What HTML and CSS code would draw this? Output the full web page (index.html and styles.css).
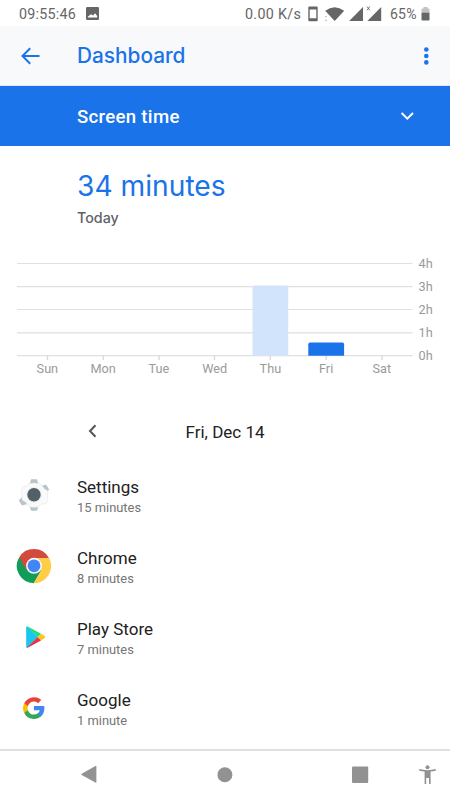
FILE: index.html
```html
<!DOCTYPE html>
<html lang="en">
<head>
<meta charset="utf-8">
<meta name="viewport" content="width=device-width, initial-scale=1">
<title>Dashboard</title>
<link rel="stylesheet" href="styles.css">
</head>
<body>
<div class="screen">
  <div class="status">
    <span class="clock">09:55:46</span>
    <svg class="photo" width="13" height="13" viewBox="0 0 13 13"><path fill="#666" fill-rule="evenodd" d="M1.200 0h10.600Q13 0 13 1.200v10.600q0 1.200-1.200 1.200H1.200Q0 13 0 11.800V1.200Q0 0 1.200 0zM1.800 10.600h9.400V9L9 6.200 7.200 8.600 5 7.200 1.800 9.800z"/></svg>
    <span class="speed">0.00 K/s</span>
    <svg class="indicators" width="57" height="18" viewBox="0 0 57 18">
      <g fill="#666">
        <path fill-rule="evenodd" d="M3.300 1.500h7.400q1 0 1 1v12.700q0 1-1 1H3.300q-1 0-1-1V2.500q0-1 1-1zM3.700 4.400v8.900h6.600V4.400z"/>
        <path d="M19.200 5.700Q28.700-1.300 38.200 5.700L28.700 16.100z"/>
        <path d="M57 2v14.100H43.200z"/>
      </g>
      <path fill="#bbb" d="M19 11.200h2v1h-2zM19 14.700h2v1h-2z"/>
    </svg>
    <svg class="sim" width="18" height="18" viewBox="0 0 18 18"><path fill="#666" d="M17.200 2v14.100H3.400z"/><path d="M3 1.500l2.800 3.800M5.800 1.500L3 5.300" stroke="#666" fill="none" stroke-width=".9"/></svg>
    <span class="percent">65%</span>
    <svg class="battery" width="9" height="14" viewBox="0 0 9 14"><path fill="#c2c2c2" d="M.5 6V2.200q0-.7.7-.7h1.300V0h4v1.500h1.300q.7 0 .7.700V6z"/><path fill="#666" d="M.5 5.800h8v7q0 .8-.8.800H1.300q-.8 0-.8-.8z"/></svg>
  </div>

  <header class="appbar">
    <svg class="back" width="20" height="18" viewBox="0 0 20 18"><path d="M19.500 9H2.500M10.200 1.300L2.500 9l7.700 7.700" fill="none" stroke="#1a73e8" stroke-width="2"/></svg>
    <h1>Dashboard</h1>
    <svg class="more" width="6" height="20" viewBox="0 0 6 20" fill="#1a73e8"><circle cx="3.300" cy="3.500" r="2.300"/><circle cx="3.300" cy="10" r="2.300"/><circle cx="3.300" cy="16.400" r="2.300"/></svg>
  </header>

  <div class="picker">
    <span>Screen time</span>
    <svg width="14" height="10" viewBox="0 0 14 10"><path d="M1.600 2L7.300 7.700 13 2" fill="none" stroke="#fff" stroke-width="2"/></svg>
  </div>

  <section class="summary">
    <div class="total">34 minutes</div>
    <div class="today">Today</div>
  </section>

  <section class="chart">
    <div class="graph">
      <svg class="plot" width="396" height="104" viewBox="0 0 396 104">
        <path d="M0 7.500h395.500M0 30.600h395.500M0 53.500h395.500M0 76.900h395.500M0 99.700h395.500" stroke="#e0e0e0" stroke-width="1.200"/>
        <path d="M30.500 100v4M86.200 100v4M142 100v4M197.500 100v4M253.300 100v4M309.200 100v4M365 100v4" stroke="#d8d8d8" stroke-width="1.300"/>
        <path fill="#d2e3fc" d="M235.500 99.500V31q0-1.500 1.500-1.500h32.700q1.500 0 1.500 1.500v68.500z"/>
        <path fill="#1a73e8" d="M291.300 99.700V88.200q0-1.700 1.700-1.700h32.400q1.700 0 1.700 1.700v11.500z"/>
      </svg>
      <div class="days"><span>Sun</span><span>Mon</span><span>Tue</span><span>Wed</span><span>Thu</span><span>Fri</span><span>Sat</span></div>
    </div>
    <div class="hours"><span>4h</span><span>3h</span><span>2h</span><span>1h</span><span>0h</span></div>
  </section>

  <div class="date">
    <svg width="9" height="14" viewBox="0 0 9 14"><path d="M7.500 1.300L2 7l5.500 5.700" fill="none" stroke="#555" stroke-width="2"/></svg>
    <span>Fri, Dec 14</span>
  </div>

  <ul class="apps">
    <li>
      <svg width="36" height="36" viewBox="0 0 36 36">
        <g fill="#b9c4c9"><path id="tooth" d="M13.400 8l1.300-5q.3-.8.900-.8h4.800q.6 0 .9.800l1.300 5v4h-9.200z"/><use href="#tooth" transform="rotate(60 18 18)"/><use href="#tooth" transform="rotate(180 18 18)"/><use href="#tooth" transform="rotate(240 18 18)"/></g>
        <path d="M12.500 6.700q5.500-1.200 11 0 2.500.5 3.300 3 1.200 2.500 4 3.500 1.600.8.800 2.700-.8 2.300 0 4.400.8 2-.1 3.700l-1.300 2.300q-.8 1.300-2.500.6-2.200-.6-3.500 1.400-1 1.400-2.800 1.700-3.400.6-6.800 0-2.500-.5-3.600-3-1-2.300-3.700-3.300-2-.8-1.200-2.900.7-2.500-.4-4.600-1-2-.1-3.800l1.400-2.400q.9-1.300 2.700-.6 1.300.2 2.300-1.300.3-1 .5-1.400z" fill="#fafafa" stroke="#e3e6e8" stroke-width=".6"/>
        <circle cx="18" cy="17.800" r="7.700" fill="#eceeef"/><circle cx="18" cy="17.700" r="6.700" fill="#546067"/>
      </svg>
      <div class="label"><b>Settings</b><small>15 minutes</small></div>
    </li>
    <li>
      <svg width="36" height="36" viewBox="0 0 36 36">
        <path fill="#109d58" d="M3.100 9.400A17.200 17.200 0 0 0 18 35.200L25.400 22.200H18z"/>
        <path fill="#d24a3e" d="M3.100 9.400A17.200 17.200 0 0 1 32.900 9.900H18L10.700 22.200z"/>
        <path fill="#ffcd46" d="M18 9.900h15.100A17.200 17.200 0 0 1 17.500 35.200l7.700-13z"/>
        <circle cx="18" cy="17.800" r="8" fill="#f5f5f5"/><circle cx="18" cy="17.800" r="6.400" fill="#4285f4"/>
      </svg>
      <div class="label"><b>Chrome</b><small>8 minutes</small></div>
    </li>
    <li>
      <svg width="36" height="36" viewBox="0 0 36 36">
        <path fill="#18c6ee" d="M10.200 8.300q.1-.9.900-.7L21.700 18 11 28.700q-.8 0-.8-.7z"/>
        <path fill="#20dc84" d="M10.700 7.500q.4-.2 1 .1L25 14.700 21.700 18z"/>
        <path fill="#e8324a" d="M10.700 28.800q.5.200 1-.1L25 21.400 21.700 18z"/>
        <path fill="#ffc41a" d="M25 14.700l3.700 2.300q1.300.9 0 1.900L25 21.400 21.700 18z"/>
      </svg>
      <div class="label"><b>Play Store</b><small>7 minutes</small></div>
    </li>
    <li>
      <svg width="36" height="36" viewBox="0 0 36 36">
        <g transform="translate(7.100 7.200) scale(.905)">
          <path fill="#4285f4" d="M23.500 12.270c0-.85-.08-1.660-.2-2.450H12v4.640h6.460a5.530 5.530 0 0 1-2.400 3.630v3.010h3.880c2.270-2.090 3.560-5.170 3.560-8.830z"/>
          <path fill="#34a853" d="M12 24c3.240 0 5.960-1.080 7.940-2.910l-3.880-3c-1.080.72-2.450 1.160-4.060 1.160-3.130 0-5.780-2.110-6.730-4.960H1.260v3.100A12 12 0 0 0 12 24z"/>
          <path fill="#fbbc05" d="M5.270 14.290A7.200 7.200 0 0 1 4.890 12c0-.79.140-1.560.38-2.290v-3.100H1.260a12 12 0 0 0 0 10.780z"/>
          <path fill="#ea4335" d="M12 4.750c1.770 0 3.350.61 4.600 1.800l3.440-3.440A12 12 0 0 0 1.260 6.610l4.010 3.100C6.220 6.860 8.870 4.750 12 4.750z"/>
        </g>
      </svg>
      <div class="label"><b>Google</b><small>1 minute</small></div>
    </li>
  </ul>

  <nav class="navbar">
    <svg width="450" height="49" viewBox="0 0 450 49" fill="#929292">
      <path d="M81.700 23.700L95.400 16q1-.5 1 .5v15.600q0 1-1 .5L81.700 25q-.8-.6 0-1.300z"/>
      <circle cx="224.900" cy="24.700" r="7.500"/>
      <rect x="352" y="16.400" width="16.200" height="16.600" rx="1.100"/>
      <circle cx="427.500" cy="17.200" r="2"/>
      <path d="M419.300 19q8.200 2.300 16.400 0l.3 1.600q-2.700.8-5.400 1V34H429v-6h-2.800v6h-1.600V21.600q-2.800-.2-5.600-1z"/>
    </svg>
  </nav>
</div>
</body>
</html>
```
FILE: styles.css
```css
* { box-sizing: border-box; }
body { margin: 0; background: #fff; font-family: Roboto, "Liberation Sans", sans-serif; }
svg { display: block; flex: none; }
.screen { width: 450px; height: 800px; display: flex; flex-direction: column; overflow: hidden; }
.status { height: 26px; flex: none; display: flex; align-items: center; padding: 1px 18px 0 19px; color: #666; font-size: 14.300px; line-height: 26px; white-space: nowrap; }
.clock { width: 67px; letter-spacing: .25px; }
.speed { margin-left: 146px; width: 61px; letter-spacing: .3px; }
.indicators { margin-top: 1px; }
.sim { margin: 1px 0 0 1px; }
.percent { margin-left: 8px; width: 31px; font-size: 14px; letter-spacing: .2px; }
.appbar { height: 60px; flex: none; display: flex; align-items: center; padding: 0 21px 0 20px; background: #f8f9fb; border-bottom: 1px solid #e4e9f1; }
.appbar h1 { flex: 1; margin: 0 0 0 37px; color: #1a73e8; font: 550 20.800px/28px Inter, sans-serif; }
.picker { height: 60px; flex: none; display: flex; align-items: center; justify-content: space-between; padding: 2px 36px 0 77px; background: #1a73e8; color: #fff; font-size: 18.600px; font-weight: 500; letter-spacing: .3px; }
.picker svg { margin-top: -3px; }
.summary { height: 110px; flex: none; padding: 22px 0 0 77px; }
.total { color: #1a73e8; font: 400 28.200px/36px Inter, sans-serif; }
.today { margin-top: 4px; color: #5f6368; font: 500 14.300px/20px Inter, sans-serif; }
.chart { height: 140px; flex: none; display: flex; padding-left: 17px; color: #9a9a9a; font-size: 12.700px; }
.graph { width: 396px; }
.days { display: grid; grid-template-columns: repeat(7, 55.750px); margin-left: 2.500px; text-align: center; line-height: 18px; }
.hours { display: flex; flex-direction: column; margin: -4px 0 0 5.500px; line-height: 23.100px; }
.date { height: 64px; flex: none; display: flex; align-items: center; padding: 8px 0 0 88px; color: #212121; font-size: 17px; }
.date svg { margin-top: -3px; }
.date span { margin-left: 88.500px; }
.apps { flex: none; height: 289px; margin: 0; padding: 0 0 0 16px; list-style: none; }
.apps li { display: flex; align-items: center; height: 70.800px; }
.label { display: flex; flex-direction: column; margin-left: 25px; padding-top: 4px; }
.label b { color: #212121; font-size: 17px; font-weight: 400; line-height: 21px; }
.label small { color: #757575; font-size: 12.900px; line-height: 19px; }
.navbar { height: 51px; flex: none; border-top: 2px solid #e0e0e0; }
.navbar svg { margin-top: -1px; }
```
